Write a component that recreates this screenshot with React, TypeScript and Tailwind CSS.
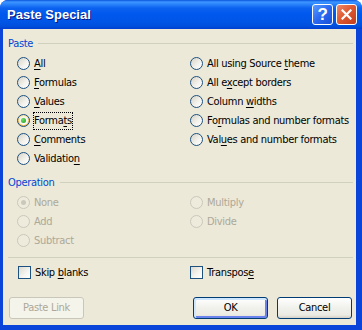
import React from "react";

const FONT = "font-['Tahoma','DejaVu_Sans_Condensed','Liberation_Sans',sans-serif] tracking-[-0.3px]";

function Lbl({ text, u }: { text: string; u?: number }) {
  if (u === undefined) return <>{text}</>;
  return (
    <>
      {text.slice(0, u)}
      <span className="underline underline-offset-[2px] decoration-1">{text[u]}</span>
      {text.slice(u + 1)}
    </>
  );
}

function Radio({
  label,
  u,
  checked,
  disabled,
  focus,
}: {
  label: string;
  u?: number;
  checked?: boolean;
  disabled?: boolean;
  focus?: boolean;
}) {
  return (
    <div className="flex h-[19px] items-center gap-[4px]">
      {disabled ? (
        <span className="flex h-[13px] w-[13px] shrink-0 items-center justify-center rounded-full border border-[#cac8bb] bg-[#eeebdd]">
          {checked && <span className="h-[5px] w-[5px] rounded-full bg-[#cac8bb]" />}
        </span>
      ) : checked ? (
        <span className="flex h-[13px] w-[13px] shrink-0 items-center justify-center rounded-full border border-[#1c5180] bg-[linear-gradient(180deg,#fde6a6,#f7b23c)]">
          <span className="flex h-[9px] w-[9px] items-center justify-center rounded-full bg-[linear-gradient(135deg,#f3efe0,#ffffff)]">
            <span className="h-[5px] w-[5px] rounded-full bg-[radial-gradient(circle_at_35%_35%,#6be06b,#1e9a1e)]" />
          </span>
        </span>
      ) : (
        <span className="h-[13px] w-[13px] shrink-0 rounded-full border border-[#1c5180] bg-[linear-gradient(135deg,#d6d3c6,#f4f3ee_60%,#ffffff)]" />
      )}
      <span
        className={`whitespace-nowrap text-[11px] leading-[14px] ${
          disabled ? "text-[#aca899]" : "text-black"
        } ${focus ? "ml-[-1px] border border-dotted border-black py-px" : ""}`}
      >
        <Lbl text={label} u={u} />
      </span>
    </div>
  );
}

function Check({ label, u }: { label: string; u?: number }) {
  return (
    <div className="flex h-[19px] items-center gap-[4px]">
      <span className="h-[13px] w-[13px] shrink-0 border border-[#1c5180] bg-[linear-gradient(135deg,#dcd9cd,#f6f5f0_60%,#ffffff)]" />
      <span className="whitespace-nowrap text-[11px] leading-[14px] text-black">
        <Lbl text={label} u={u} />
      </span>
    </div>
  );
}

function Header({ text }: { text: string }) {
  return (
    <div className="flex h-[13px] items-center pl-[5px] pr-[3px]">
      <span className="text-[11px] leading-[13px] text-[#0046d5]">{text}</span>
      <span className="ml-[5px] h-px flex-1 bg-[#d0d0bf]" />
    </div>
  );
}

function Btn({
  label,
  disabled,
  def,
}: {
  label: string;
  disabled?: boolean;
  def?: boolean;
}) {
  if (disabled) {
    return (
      <div className="flex h-[22px] w-[75px] items-center justify-center rounded-[3px] border border-[#c9c7ba] bg-[#f5f4ea] text-[11px] text-[#aca899]">
        {label}
      </div>
    );
  }
  return (
    <div
      className={`flex h-[22px] w-[75px] items-center justify-center rounded-[3px] border border-[#003c74] bg-[linear-gradient(180deg,#ffffff,#f3f3ef_40%,#ebeae3_85%,#d6d0c5)] text-[11px] text-black ${
        def
          ? "shadow-[inset_1px_1px_0_1px_#cee7ff,inset_-1px_-1px_0_1px_#6982ee]"
          : ""
      }`}
    >
      {label}
    </div>
  );
}

export default function App() {
  return (
    <div className={`${FONT} w-[362px] h-[330px] overflow-hidden`}>
      <div className="flex h-[330px] w-[362px] flex-col rounded-t-[8px] bg-[#0b44d8]">
        {/* Title bar */}
        <div className="flex h-[29px] shrink-0 items-center rounded-t-[8px] bg-[linear-gradient(180deg,#0a56e0_0px,#3d95ff_2px,#2c86fb_4px,#0c62ef_8px,#0058ee_14px,#0055e5_22px,#004fdd_26px,#003fd0_29px)] pl-[7px] pr-[5px]">
          <span className="flex-1 font-['Liberation_Sans',sans-serif] text-[13px] font-bold leading-[16px] tracking-normal text-white [text-shadow:1px_1px_0_#0a1883]">
            Paste Special
          </span>
          <div className="flex gap-[3px]">
            <div className="flex h-[21px] w-[21px] items-center justify-center rounded-[3px] border border-white bg-[linear-gradient(135deg,#5b9bff,#2a68f0_50%,#1a50d8)]">
              <span className="font-['Liberation_Sans',sans-serif] text-[17px] font-bold leading-[17px] text-white">?</span>
            </div>
            <div className="flex h-[21px] w-[21px] items-center justify-center rounded-[3px] border border-white bg-[linear-gradient(135deg,#f0896a,#e05a32_45%,#c23d1c)]">
              <svg width="11" height="11" viewBox="0 0 11 11">
                <path d="M1.5 1.5 L9.5 9.5 M9.5 1.5 L1.5 9.5" stroke="white" strokeWidth="2.2" strokeLinecap="square" />
              </svg>
            </div>
          </div>
        </div>

        {/* Client area */}
        <div className="ml-[3px] flex h-[296px] w-[353px] flex-col bg-[#ece9d8] pt-[8px]">
          <Header text="Paste" />
          <div className="mt-[4px] grid grid-cols-[173px_1fr] pl-[14px]">
            <div className="flex flex-col">
              <Radio label="All" u={0} />
              <Radio label="Formulas" u={0} />
              <Radio label="Values" u={0} />
              <Radio label="Formats" u={5} checked focus />
              <Radio label="Comments" u={0} />
              <Radio label="Validation" u={9} />
            </div>
            <div className="flex flex-col">
              <Radio label="All using Source theme" u={17} />
              <Radio label="All except borders" u={5} />
              <Radio label="Column widths" u={7} />
              <Radio label="Formulas and number formats" u={2} />
              <Radio label="Values and number formats" u={3} />
            </div>
          </div>

          <div className="mt-[8px]">
            <Header text="Operation" />
          </div>
          <div className="mt-[4px] grid grid-cols-[173px_1fr] pl-[14px]">
            <div className="flex flex-col">
              <Radio label="None" checked disabled />
              <Radio label="Add" disabled />
              <Radio label="Subtract" disabled />
            </div>
            <div className="flex flex-col">
              <Radio label="Multiply" disabled />
              <Radio label="Divide" disabled />
            </div>
          </div>

          <div className="mt-[7px] pl-[5px] pr-[3px]">
            <div className="h-px bg-[#d0d0bf]" />
          </div>

          <div className="mt-[5px] grid grid-cols-[172px_1fr] pl-[15px]">
            <Check label="Skip blanks" u={5} />
            <Check label="Transpose" u={8} />
          </div>

          <div className="mt-[15px] flex items-center pl-[6px] pr-[4px]">
            <Btn label="Paste Link" disabled />
            <div className="flex-1" />
            <div className="flex gap-[9px]">
              <Btn label="OK" def />
              <Btn label="Cancel" />
            </div>
          </div>
        </div>
      </div>
    </div>
  );
}
